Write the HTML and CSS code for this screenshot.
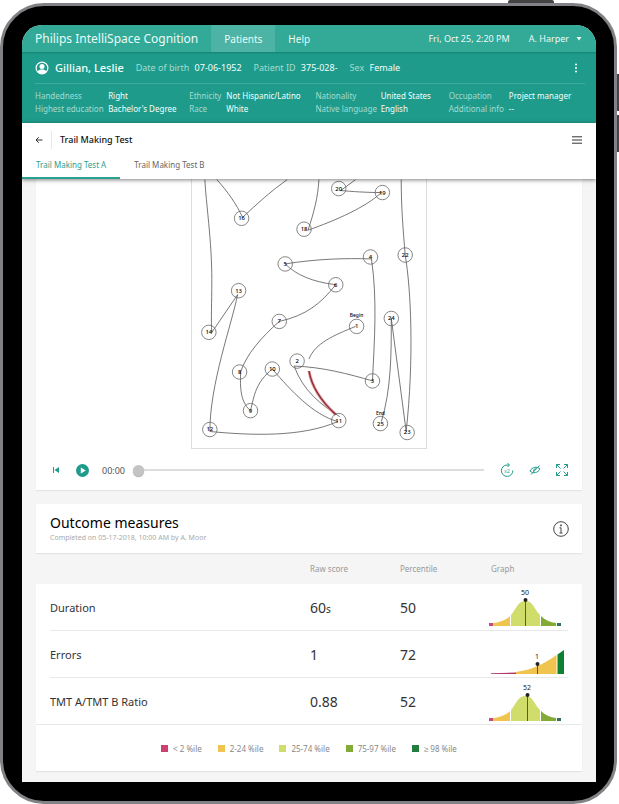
FILE: index.html
```html
<!doctype html>
<html lang="en">
  <head>
    <meta charset="UTF-8" />
    <meta name="viewport" content="width=device-width, initial-scale=1" />
    <title>Trail Making Test</title>
    <link rel="stylesheet" href="styles.css">
  </head>
  <body>
    <div class="device">
      <span class="key key-power"></span>
      <span class="key key-up"></span>
      <span class="key key-down"></span>

      <div class="screen">
        <header class="topbar">
          <span class="brand">Philips IntelliSpace Cognition</span>
          <nav class="nav">
            <a class="nav-link active" href="#patients">Patients</a>
            <a class="nav-link" href="#help">Help</a>
          </nav>
          <span class="date">Fri, Oct 25, 2:20 PM</span>
          <button class="user" type="button">A. Harper
            <svg width="6" height="4" viewBox="0 0 6 4"><path d="M.5 0h5L3 3.500z" fill="currentColor"/></svg>
          </button>
        </header>

        <section class="patient">
          <div class="patient-main">
            <svg class="avatar" width="14" height="14" viewBox="0 0 14 14">
              <circle cx="7" cy="7" r="5.900" fill="none" stroke="#fff" stroke-width="1.200"/>
              <circle cx="7" cy="5.400" r="2.500" fill="#fff"/>
              <path d="M2.500 11c.8-2 2.600-2.500 4.500-2.500s3.700.5 4.500 2.500a6 6 0 0 1-9 0z" fill="#fff"/>
            </svg>
            <h1 class="patient-name">Gillian, Leslie</h1>
            <span class="fact"><i>Date of birth</i> 07-06-1952</span>
            <span class="fact"><i>Patient ID</i> 375-028-</span>
            <span class="fact"><i>Sex</i> Female</span>
            <button class="icon-btn more" type="button" aria-label="More">
              <svg width="4" height="12" viewBox="0 0 4 12" fill="#fff"><circle cx="2" cy="2.500" r="1"/><circle cx="2" cy="6" r="1"/><circle cx="2" cy="9.500" r="1"/></svg>
            </button>
          </div>
          <dl class="details">
            <dt>Handedness</dt><dd>Right</dd>
            <dt>Ethnicity</dt><dd>Not Hispanic/Latino</dd>
            <dt>Nationality</dt><dd>United States</dd>
            <dt>Occupation</dt><dd>Project manager</dd>
            <dt>Highest education</dt><dd>Bachelor's Degree</dd>
            <dt>Race</dt><dd>White</dd>
            <dt>Native language</dt><dd>English</dd>
            <dt>Additional info</dt><dd>--</dd>
          </dl>
        </section>

        <section class="testbar">
          <div class="test-title">
            <button class="icon-btn back" type="button" aria-label="Back">
              <svg width="8" height="8" viewBox="0 0 8 8" fill="none" stroke="#333"><path d="M7.500 4H1M3.800 1.200 1 4l2.800 2.800"/></svg>
            </button>
            <h2>Trail Making Test</h2>
            <button class="icon-btn" type="button" aria-label="Menu">
              <svg width="10" height="8" viewBox="0 0 10 8" fill="none" stroke="#333"><path d="M0 .8h10M0 4h10M0 7.200h10"/></svg>
            </button>
          </div>
          <nav class="tabs">
            <a class="tab active" href="#a">Trail Making Test A</a>
            <a class="tab" href="#b">Trail Making Test B</a>
          </nav>
        </section>

        <main class="content">
          <section class="card player">
            <svg class="board" width="236" height="270" viewBox="0 -1 236 270">
              <g class="trail">
                <path d="M13-1C14 22 20 60 20 100C20 125 19 140 20 153L46 115C40 145 18 205 18 253C60 257 110 259 147 243C122 236 100 212 81 190C64 204 63 216 59 232C47 222 49 203 49 193C55 175 70 158 88 142C115 136 130 124 145 105C121 102 105 95 94 84C125 79 155 78 181 79C187 120 184 160 182 202C158 195 132 188 103 187C112 212 130 226 149 238"/>
                <path d="M25-1C36 11 45 24 51 37C65 24 80 10 96-1"/>
                <path d="M128-1C127 17 123 32 117 50C145 40 175 27 191 12C175 12 162 11 150 10L165-1"/>
                <path d="M211-1C211 28 213 50 215 75C221 110 224 180 216 253L201 139C201 175 201 210 191 243"/>
                <path d="M165 147C143 156 124 164 118 180"/>
              </g>
              <path class="error-glow" d="M118 192C121 210 133 225 145 236"/>
              <path class="error" d="M118 192C121 210 133 225 145 236"/>
              <g class="nodes">
                <circle cx="50" cy="38" r="7.300"/><circle cx="148" cy="8" r="7.300"/><circle cx="192" cy="12" r="7.300"/>
                <circle cx="113" cy="49" r="7.300"/><circle cx="180" cy="77" r="7.300"/><circle cx="215" cy="75" r="7.300"/>
                <circle cx="94" cy="84" r="7.300"/><circle cx="145" cy="105" r="7.300"/><circle cx="47" cy="111" r="7.300"/>
                <circle cx="88" cy="142" r="7.300"/><circle cx="17" cy="153" r="7.300"/><circle cx="166" cy="147" r="7.300"/>
                <circle cx="201" cy="139" r="7.300"/><circle cx="106" cy="182" r="7.300"/><circle cx="182" cy="202" r="7.300"/>
                <circle cx="48" cy="193" r="7.300"/><circle cx="81" cy="190" r="7.300"/><circle cx="59" cy="232" r="7.300"/>
                <circle cx="18" cy="251" r="7.300"/><circle cx="148" cy="242" r="7.300"/><circle cx="190" cy="245" r="7.300"/>
                <circle cx="217" cy="254" r="7.300"/>
              </g>
              <g class="numbers">
                <text x="50" y="40">16</text><text x="148" y="10">20</text><text x="192" y="14">19</text>
                <text x="113" y="51">18</text><text x="180" y="79">4</text><text x="215" y="77">22</text>
                <text x="94" y="86">5</text><text x="145" y="107">6</text><text x="47" y="113">13</text>
                <text x="88" y="144">7</text><text x="17" y="155">14</text><text x="166" y="149">1</text>
                <text x="201" y="141">24</text><text x="106" y="184">2</text><text x="182" y="204">3</text>
                <text x="48" y="195">8</text><text x="81" y="192">10</text><text x="59" y="234">9</text>
                <text x="18" y="253">12</text><text x="148" y="244">11</text><text x="190" y="247">25</text>
                <text x="217" y="256">23</text>
                <text class="tiny" x="166" y="138">Begin</text><text class="tiny" x="190" y="236">End</text>
              </g>
            </svg>

            <div class="controls">
              <button class="icon-btn" type="button" aria-label="Back to start">
                <svg width="6" height="6" viewBox="0 0 6 6" fill="#1f9b8b"><path d="M0 0h1v6H0zM6 0v6L1.500 3z"/></svg>
              </button>
              <button class="icon-btn play" type="button" aria-label="Play">
                <svg width="13" height="13" viewBox="0 0 13 13"><circle cx="6.500" cy="6.500" r="6.500" fill="#1f9b8b"/><path d="M4.800 3.500v6l5-3z" fill="#fff"/></svg>
              </button>
              <label class="time" for="seek">00:00</label>
              <input class="seek" id="seek" type="range" min="0" max="60" value="0" />
              <button class="icon-btn" type="button" aria-label="Speed x2">
                <svg width="14" height="14" viewBox="0 0 14 14" fill="none" stroke="#1f9b8b"><path d="M9 2H7A5.700 5.700 0 1 0 12.800 7.500"/><path d="M7.500 0 9.500 2l-2 2"/><text class="speed" x="7" y="10">x2</text></svg>
              </button>
              <button class="icon-btn" type="button" aria-label="Hide trail">
                <svg width="12" height="12" viewBox="0 0 12 12" fill="none" stroke="#1f9b8b"><path d="M1 7C3 3 8 2 11 5 9 9 4 10 1 7z"/><path d="M4.500 7.500c-.5-2 1-3 2.500-2.500M2 10.500l8.500-9"/></svg>
              </button>
              <button class="icon-btn" type="button" aria-label="Full screen">
                <svg width="12" height="12" viewBox="0 0 12 12" fill="none" stroke="#1f9b8b"><path d="M4 .5H.5V4M8 .5h3.500V4M4 11.500H.5V8M8 11.500h3.500V8M.5.5l4 4M11.500.5l-4 4M.5 11.500l4-4M11.500 11.500l-4-4"/></svg>
              </button>
            </div>
          </section>

          <section class="card outcome">
            <div>
              <h2>Outcome measures</h2>
              <p>Completed on 05-17-2018, 10:00 AM by A. Moor</p>
            </div>
            <button class="icon-btn" type="button" aria-label="Information">
              <svg width="16" height="16" viewBox="0 0 16 16" fill="none" stroke="#444"><circle cx="8" cy="8" r="7.300"/><path d="M6.500 6.800H8v5M6.500 12h3"/><path d="M8 3.500v1.700" stroke-width="1.600"/></svg>
            </button>
          </section>

          <table class="measures">
            <thead>
              <tr><th class="col-name"></th><th class="col-raw">Raw score</th><th class="col-pct">Percentile</th><th class="col-graph">Graph</th></tr>
            </thead>
            <tbody>
              <tr>
                <th scope="row">Duration</th><td>60<small>s</small></td><td>50</td>
                <td>
                  <svg class="graph" width="80" height="46" viewBox="0 0 80 46">
                    <path fill="#c9497a" d="M3 38h4v3H3z"/>
                    <path fill="#efc44f" d="M7 38C14 37.500 20 35 24 31v10H7z"/>
                    <path fill="#d0dd6b" d="M25 30C30 24 32 16 39.500 16S48 24 54 30v11H25z"/>
                    <path fill="#82aa35" d="M55 31C59 35 64 37.500 70 38v3H55z"/>
                    <path fill="#31705b" d="M71 38h4v3h-4z"/>
                    <path stroke="#222" stroke-width=".7" d="M39.500 15v26"/><circle cx="39.500" cy="15" r="2"/>
                    <text x="39" y="10">50</text>
                  </svg>
                </td>
              </tr>
              <tr>
                <th scope="row">Errors</th><td>1</td><td>72</td>
                <td>
                  <svg class="graph" width="80" height="46" viewBox="0 0 80 46">
                    <path fill="#b0386c" d="M5 41.200 30 40.600V42H5z"/>
                    <path fill="#efc44f" d="M30 40C44 38 57 33 70.500 23v19H30z"/>
                    <path fill="#0e8032" d="M71.500 22.500 78 18v24h-6.500z"/>
                    <path stroke="#222" stroke-width=".7" d="M51.500 32v10"/><circle cx="51.500" cy="32" r="2"/>
                    <text x="51" y="27">1</text>
                  </svg>
                </td>
              </tr>
              <tr>
                <th scope="row">TMT A/TMT B Ratio</th><td>0.88</td><td>52</td>
                <td>
                  <svg class="graph" width="80" height="46" viewBox="0 0 80 46">
                    <path fill="#c9497a" d="M3 39h4v3H3z"/>
                    <path fill="#efc44f" d="M7 39C14 38.500 20 36 24 32v10H7z"/>
                    <path fill="#d0dd6b" d="M25 31C30 25 32 17 39.500 17S48 25 54 31v11H25z"/>
                    <path fill="#82aa35" d="M55 32C59 36 64 38.500 70 39v3H55z"/>
                    <path fill="#31705b" d="M71 39h4v3h-4z"/>
                    <path stroke="#222" stroke-width=".7" d="M41.500 16v26"/><circle cx="41.500" cy="16" r="2"/>
                    <text x="41" y="11">52</text>
                  </svg>
                </td>
              </tr>
            </tbody>
          </table>
          <ul class="legend">
            <li class="lowest">&lt; 2 %ile</li>
            <li class="low">2-24 %ile</li>
            <li class="mid">25-74 %ile</li>
            <li class="high">75-97 %ile</li>
            <li class="highest">≥ 98 %ile</li>
          </ul>
        </main>
      </div>
    </div>
  </body>
</html>
```
FILE: styles.css
```css
* {
  box-sizing: border-box;
}
body {
  margin: 0;
  background: #fff;
  font-family: "Noto Sans", sans-serif;
  color: #333;
}
h1, h2, p, dl, dd, ul {
  margin: 0;
  padding: 0;
  font-weight: normal;
}
a {
  text-decoration: none;
}
button {
  border: 0;
  padding: 0;
  background: none;
  font: inherit;
  color: inherit;
  cursor: pointer;
}
svg {
  display: block;
}

/* tablet frame */
.device {
  position: relative;
  margin: 3px 2px 0 0;
  padding: 19px 18px 19px 19px;
  border: 3px solid #808285;
  border-radius: 44px;
  background: #000;
}
.key {
  position: absolute;
  background: #444;
}
.key-power {
  top: -6px;
  right: 60px;
  width: 46px;
  height: 3px;
  border-radius: 2px 2px 0 0;
}
.key-up,
.key-down {
  top: 68px;
  right: -5px;
  width: 2px;
  height: 37px;
}
.key-down {
  top: 109px;
}
.screen {
  border-radius: 20px 20px 0 0;
  overflow: hidden;
  background: #f5f5f5;
}

/* top bar */
.topbar {
  display: flex;
  align-items: center;
  height: 27px;
  padding: 0 14px 0 13px;
  background: #33a998;
  color: #e9fbf7;
  font-size: 9px;
}
.brand {
  font-size: 12px;
}
.nav {
  display: flex;
  align-self: stretch;
  margin-left: 13px;
}
.nav-link {
  display: flex;
  align-items: center;
  padding: 0 13px;
  color: inherit;
  font-size: 10px;
}
.nav-link.active {
  background: #4db3a4;
}
.date {
  margin-left: auto;
}
.user {
  display: flex;
  align-items: center;
  gap: 7px;
  margin-left: 19px;
}

/* patient */
.patient {
  height: 71px;
  padding: 0 11px 0 13px;
  background: #1f9b8b;
  color: #f2fffc;
  box-shadow: inset 0 2px 2px -1px #178072;
}
.patient-main {
  display: flex;
  align-items: center;
  height: 32px;
  border-bottom: 1px solid #3fa99b;
}
.patient-name {
  margin-left: 6px;
  font-size: 11px;
  font-weight: 500;
}
.fact {
  margin-left: 12px;
  font-size: 9px;
}
.fact i,
.details dt {
  font-style: normal;
  color: #a3dbd2;
}
.fact i {
  margin-right: 3px;
}
.more {
  margin-left: auto;
  margin-right: 7px;
}
.details {
  display: grid;
  grid-template-columns: 73fr 81fr 37fr 89fr 65fr 68fr 60fr 76fr;
  padding-top: 5px;
  font-size: 8px;
  line-height: 13px;
  white-space: nowrap;
}
.details > * {
  min-width: 0;
}

/* test title and tabs */
.testbar {
  position: relative;
  height: 56px;
  background: #fff;
  box-shadow: 0 1px 4px rgba(0, 0, 0, 0.5);
}
.test-title {
  display: flex;
  align-items: center;
  height: 33px;
  padding: 0 14px 0 13px;
}
.test-title h2 {
  flex: 1;
  margin-left: 8px;
  padding-left: 8px;
  border-left: 1px solid #e8e8e8;
  font-size: 9px;
  font-weight: 500;
  line-height: 18px;
  color: #111;
}
.tabs {
  display: flex;
  height: 23px;
}
.tab {
  padding: 2px 14px 0;
  font-size: 8px;
  line-height: 14px;
  color: #666;
}
.tab.active {
  border-bottom: 2px solid #2aa08f;
  color: #2aa08f;
}

/* content */
.content {
  padding: 0 14px 11px;
}
.card {
  background: #fff;
  box-shadow: 0 1px 1px #e4e4e4;
}
.board {
  margin: 0 auto;
  border: 1px solid #ddd;
  border-top: 0;
}
.trail,
.nodes {
  fill: none;
  stroke: #555;
  stroke-width: 0.8;
}
.nodes {
  stroke: #666;
}
.error,
.error-glow {
  fill: none;
  stroke: #8d2831;
  stroke-width: 1.4;
}
.error-glow {
  stroke: #df9a9e;
  stroke-width: 3;
}
.numbers {
  font-size: 6px;
  font-weight: 500;
  text-anchor: middle;
  fill: #000;
}
.tiny {
  font-size: 5px;
}
.controls {
  display: flex;
  align-items: center;
  gap: 16px;
  height: 41px;
  padding: 1px 14px 0 17px;
}
.play {
  margin-left: 1px;
}
.time {
  margin-left: -3px;
  font-size: 9px;
  color: #555;
}
.seek {
  flex: 1;
  min-width: 0;
  height: 12px;
  margin: 0 0 0 -8px;
  appearance: none;
  background: linear-gradient(#ddd, #ddd) center / 100% 2px no-repeat;
}
.seek::-webkit-slider-thumb {
  appearance: none;
  width: 11px;
  height: 11px;
  border-radius: 50%;
  background: #c4c4c4;
  box-shadow: 0 1px 1px #aaa;
}
.seek ~ .icon-btn + .icon-btn {
  margin-left: -1px;
}
.speed {
  font-size: 5px;
  text-anchor: middle;
  fill: #1f9b8b;
  stroke: none;
}
.outcome {
  display: flex;
  align-items: center;
  justify-content: space-between;
  height: 49px;
  margin-top: 14px;
  padding: 0 13px 0 14px;
}
.outcome h2 {
  font-size: 14px;
  line-height: 18px;
  color: #000;
}
.outcome p {
  font-size: 7px;
  line-height: 12px;
  color: #aaa;
}

/* measures */
.measures {
  width: 100%;
  table-layout: fixed;
  border-collapse: collapse;
}
.measures th,
.measures td {
  padding: 0;
  text-align: left;
  font-weight: normal;
}
.measures thead th {
  height: 31px;
  font-size: 8px;
  color: #999;
}
.col-raw {
  width: 90px;
}
.col-pct {
  width: 86px;
}
.measures .col-graph {
  width: 96px;
  padding-left: 5px;
}
.measures tbody tr {
  height: 47px;
  background: linear-gradient(#e8e8e8, #e8e8e8) bottom / calc(100% - 28px) 1px no-repeat, #fff;
}
.measures tbody tr:last-child {
  background-size: 100% 1px, auto;
}
.measures tbody th {
  padding-left: 14px;
  font-size: 11px;
}
.measures td {
  font-size: 14px;
}
.measures small {
  font-size: 10px;
}
.graph {
  font-size: 7px;
  text-anchor: middle;
  fill: #222;
}
.legend {
  display: flex;
  justify-content: center;
  align-items: center;
  gap: 16px;
  height: 46px;
  background: #fff;
  box-shadow: 0 1px 1px #e4e4e4;
  list-style: none;
  font-size: 8px;
  color: #888;
}
.legend li {
  display: flex;
  align-items: center;
  gap: 5px;
}
.legend li::before {
  content: "";
  width: 7px;
  height: 7px;
  background: #cf4070;
}
.legend .low::before {
  background: #efc44f;
}
.legend .mid::before {
  background: #d0dd6b;
}
.legend .high::before {
  background: #82aa35;
}
.legend .highest::before {
  background: #237d3e;
}
```
